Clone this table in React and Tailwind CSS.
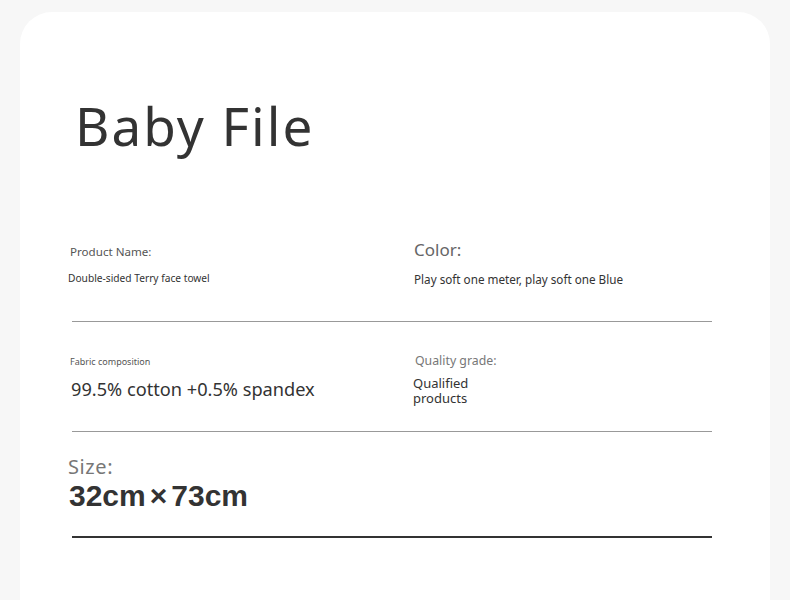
export default function App() {
  const noto = { fontFamily: '"Noto Sans", sans-serif' };
  return (
    <div className="w-[790px] h-[600px] overflow-hidden bg-[#f7f7f7] pt-[12px] px-[20px]" style={noto}>
      <div className="bg-white rounded-t-[32px] h-[640px] pt-[87px]">
        <div className="pl-[55px] text-[53px] leading-none text-[#333] tracking-[2px]">Baby File</div>

        <div className="mt-[88px] h-[81px] grid grid-cols-[344px_1fr] pl-[50px]">
          <div className="pt-[6px]">
            <div className="text-[11.6px] leading-none text-[#555]">Product Name:</div>
            <div className="mt-[15px] -ml-[2px] text-[10.2px] leading-none text-[#333]">Double-sided Terry face towel</div>
          </div>
          <div className="pt-[1px]">
            <div className="text-[17px] leading-none text-[#666]">Color:</div>
            <div className="mt-[16px] text-[11.7px] leading-none text-[#333]">Play soft one meter, play soft one Blue</div>
          </div>
        </div>
        <div className="ml-[52px] w-[640px] h-px bg-[#999]" />

        <div className="h-[109px] grid grid-cols-[344px_1fr] pl-[50px]">
          <div className="pt-[35px]">
            <div className="text-[9px] leading-none text-[#555]">Fabric composition</div>
            <div className="mt-[14px] ml-[1px] text-[18.2px] leading-none text-[#333]">99.5% cotton +0.5% spandex</div>
          </div>
          <div className="pt-[33px]">
            <div className="ml-[1px] text-[12.3px] leading-none text-[#777]">Quality grade:</div>
            <div className="mt-[9px] -ml-[1px] text-[13px] leading-[15px] text-[#333]">Qualified<br />products</div>
          </div>
        </div>
        <div className="ml-[52px] w-[640px] h-px bg-[#999]" />

        <div className="h-[104px] pl-[48px] pt-[25px]">
          <div className="text-[20px] leading-none text-[#777] tracking-[0.6px]">Size:</div>
          <div className="mt-[4px] ml-[1px] flex items-center text-[30px] leading-none font-semibold text-[#333]" style={{ fontFamily: '"Liberation Sans", Arial, sans-serif' }}>
            <span>32cm</span>
            <span className="mx-[4px]">×</span>
            <span>73cm</span>
          </div>
        </div>
        <div className="ml-[52px] w-[640px] h-[2px] bg-[#333]" />
      </div>
    </div>
  );
}
